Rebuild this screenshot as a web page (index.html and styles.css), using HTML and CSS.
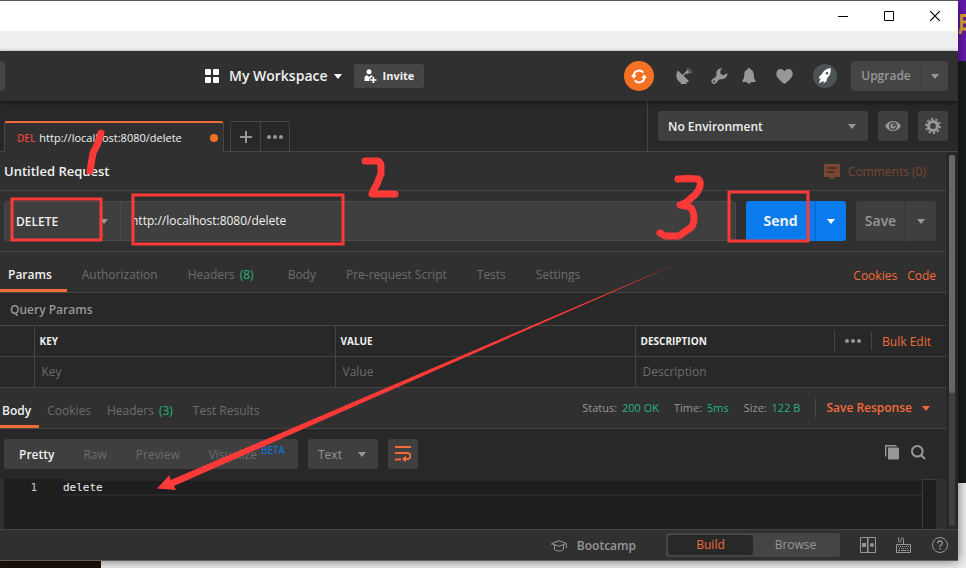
FILE: index.html
```html
<!DOCTYPE html>
<html lang="en">
<head>
<meta charset="utf-8">
<title>Postman</title>
<link rel="stylesheet" href="styles.css">
</head>
<body>
<div class="desktop">
  <div class="app">
    <header class="titlebar">
      <button class="win-btn" aria-label="Minimize"><svg width="10" height="11" viewBox="0 0 10 11"><path d="M0 5.500h10" stroke="#000"/></svg></button>
      <button class="win-btn" aria-label="Maximize"><svg width="10" height="10" viewBox="0 0 10 10"><path d="M.5.500h9v9h-9z" fill="none" stroke="#000"/></svg></button>
      <button class="win-btn" aria-label="Close"><svg width="10" height="10" viewBox="0 0 10 10"><path d="M0 0l10 10M10 0L0 10" stroke="#000" stroke-width="1.200"/></svg></button>
    </header>
    <div class="menubar"></div>

    <div class="header">
      <span class="nub"></span>
      <button class="workspace">
        <svg width="14" height="14" viewBox="0 0 14 14" fill="#fff"><rect width="6" height="6" rx="1"/><rect x="8" width="6" height="6" rx="1"/><rect y="8" width="6" height="6" rx="1"/><rect x="8" y="8" width="6" height="6" rx="1"/></svg>
        <span>My Workspace</span>
        <i class="caret white"></i>
      </button>
      <button class="btn invite">
        <svg width="13" height="14" viewBox="0 0 13 14" fill="#fff"><circle cx="5" cy="2.700" r="2.500"/><path d="M.5 12V9.500C.5 7.500 1.500 6.500 3 6.200L5 8l2-1.800c1 .2 1.700.8 2 1.800H7v1.500H5.500V12z"/><path d="M8.500 8h1.700v2.200h2.300v1.600h-2.300V14H8.500v-2.200H6.300v-1.600h2.200z"/></svg>
        Invite
      </button>
      <div class="tools">
        <button class="sync" aria-label="Sync"><svg width="16" height="15" viewBox="0 0 16 15" fill="none" stroke="#fff" stroke-width="2"><path d="M12.300 3.600A5.600 5.600 0 0 0 2.500 6.500M3.700 11.400A5.600 5.600 0 0 0 13.500 8.500"/><path d="M0 6h5.600L2.800 9.800zM10.400 9H16l-2.800-3.800z" fill="#fff" stroke="none"/></svg></button>
        <button class="icon dish" aria-label="Capture"><svg width="17" height="17" viewBox="0 0 17 17" fill="#979797"><path d="M2 2.500l11 10.500a6.700 6.700 0 0 1-3 1.700l1 1.300H4.500l.5-1.200C0 12.500-1 7 2 2.500z"/><path d="M7 7.500l4-4" stroke="#979797" stroke-width="1.500"/><circle cx="11.200" cy="4.300" r="1.500"/><path d="M10.500 2a4 4 0 0 1 3.500 3.700M11 .5a5 5 0 0 1 4.500 4.700" fill="none" stroke="#979797" stroke-width=".8"/></svg></button>
        <button class="icon wrench" aria-label="Settings"><svg width="17" height="17" viewBox="0 0 17 17" fill="#979797"><path d="M11.500.5C7.500 0 4.500 3 5.500 6.500c.2 1-.3 1.800-1 2.500L1.300 11.200a2.700 2.700 0 0 0 .2 4.300c1.500 1 3.200.3 4.300-1.300l1.700-2c.8-.8 1.700-1.200 2.800-1 3.800.4 6.500-2.500 6-6.200l-4 2.500-2.800-1.700-.2-3z"/><circle cx="3" cy="13.500" r=".9" fill="#303030"/></svg></button>
        <button class="icon bell" aria-label="Notifications"><svg width="14" height="16" viewBox="0 0 14 16" fill="#979797"><path d="M7 0c1 0 1.500.7 1.500 1.400C11 2.200 11.800 4.500 11.800 7c0 3 .5 4 1.700 5.500v1.500H.5v-1.500C1.700 11 2.200 10 2.200 7c0-2.500.8-4.800 3.300-5.600C5.500.7 6 0 7 0zM5 14h4c0 2.200-4 2.200-4 0z"/></svg></button>
        <button class="icon heart" aria-label="Favorites"><svg width="17" height="15" viewBox="0 0 17 15" fill="#979797"><path d="M8.500 15C4 11.500.3 8.500.3 4.700.3-.2 6-1.500 8.500 2.400 11-1.500 16.700-.2 16.700 4.700c0 3.800-3.700 6.800-8.200 10.300z"/></svg></button>
        <button class="avatar" aria-label="Account"><svg width="14" height="16" viewBox="0 0 14 16" fill="#fff"><path d="M12.500 0C8 .5 5.500 3 4 6L1.500 8.300.8 11l2-.9-.5 1.400-1.500 4 3.600-2 1.400-.5-.2 2.300 2.900-2 .8-3.500C12 7.500 13.500 4 12.500 0z"/><circle cx="9" cy="5.300" r="1.300" fill="#4b5354"/></svg></button>
        <div class="split upgrade">
          <button>Upgrade</button><button aria-label="Upgrade options"><i class="caret"></i></button>
        </div>
      </div>
    </div>

    <div class="tabstrip">
      <div class="tabs">
        <button class="req-tab"><b>DEL</b><span>http://localhost:8080/delete</span><i class="unsaved"></i></button>
        <div class="tab-actions">
          <button aria-label="New tab"><svg width="12" height="12" viewBox="0 0 12 12"><path d="M6 0v12M0 6h12" stroke="#979797" stroke-width="2"/></svg></button>
          <button aria-label="Tab options"><svg width="16" height="4" viewBox="0 0 16 4" fill="#979797"><circle cx="2" cy="2" r="2"/><circle cx="8" cy="2" r="2"/><circle cx="14" cy="2" r="2"/></svg></button>
        </div>
      </div>
      <div class="env">
        <label class="select env-select"><select aria-label="Environment"><option>No Environment</option></select><i class="caret"></i></label>
        <button class="btn square" aria-label="Preview environment"><svg width="16" height="10" viewBox="0 0 16 10"><path d="M0 5C4-1.600 12-1.600 16 5 12 11.600 4 11.600 0 5z" fill="#979797"/><circle cx="8" cy="5" r="3.300" fill="none" stroke="#3f3f3f" stroke-width="1.300"/><circle cx="8.800" cy="4.200" r="1.200" fill="#3f3f3f"/></svg></button>
        <button class="btn square" aria-label="Manage environments"><svg width="16" height="16" viewBox="0 0 16 16"><circle cx="8" cy="8" r="4.500" fill="none" stroke="#979797" stroke-width="3.200"/><circle cx="8" cy="8" r="7" fill="none" stroke="#979797" stroke-width="2" stroke-dasharray="2.200 2.198"/></svg></button>
      </div>
    </div>

    <div class="body">
      <main class="content">
        <div class="title-row">
          <h1>Untitled Request</h1>
          <button class="comments"><svg width="16" height="16" viewBox="0 0 16 16"><path d="M0 0h16v13h-5.500L8 16l-2.500-3H0z" fill="#7c4630"/><path d="M3 4h10M3 8h7" stroke="#303030" stroke-width="1.500"/></svg>Comments (0)</button>
        </div>

        <form class="url-row">
          <div class="url-box">
            <label class="method"><select aria-label="Method"><option>DELETE</option></select><i class="caret"></i></label>
            <input class="url" aria-label="Request URL" value="http://localhost:8080/delete">
          </div>
          <div class="split send"><button type="button">Send</button><button type="button" aria-label="Send options"><i class="caret white"></i></button></div>
          <div class="split save"><button type="button">Save</button><button type="button" aria-label="Save options"><i class="caret"></i></button></div>
        </form>

        <nav class="nav request-nav">
          <a class="on" href="#">Params</a><a href="#">Authorization</a><a href="#">Headers <em>(8)</em></a><a href="#">Body</a><a href="#">Pre-request Script</a><a href="#">Tests</a><a href="#">Settings</a>
          <div class="nav-links"><a href="#">Cookies</a><a href="#">Code</a></div>
        </nav>

        <h2>Query Params</h2>
        <table>
          <thead>
            <tr><th class="check"></th><th class="key">KEY</th><th class="value">VALUE</th>
              <th><div class="desc-head"><span>DESCRIPTION</span>
                <button class="more" aria-label="Columns"><svg width="16" height="4" viewBox="0 0 16 4" fill="#979797"><circle cx="2" cy="2" r="2"/><circle cx="8" cy="2" r="2"/><circle cx="14" cy="2" r="2"/></svg></button>
                <button class="bulk">Bulk Edit</button></div></th></tr>
          </thead>
          <tbody>
            <tr><td></td><td><input aria-label="Key" placeholder="Key"></td><td><input aria-label="Value" placeholder="Value"></td><td><input aria-label="Description" placeholder="Description"></td></tr>
          </tbody>
        </table>

        <div class="nav response-nav">
          <a class="on" href="#">Body</a><a href="#">Cookies</a><a href="#">Headers <em>(3)</em></a><a href="#">Test Results</a>
          <div class="meta">
            <span>Status: <em>200 OK</em></span><span>Time: <em>5ms</em></span><span>Size: <em>122 B</em></span>
            <button class="save-response">Save Response<i class="caret orange"></i></button>
          </div>
        </div>

        <div class="viewer-bar">
          <div class="modes"><button class="on">Pretty</button><button>Raw</button><button>Preview</button><button>Visualize<sup>BETA</sup></button></div>
          <label class="select lang"><select aria-label="Language"><option>Text</option></select><i class="caret"></i></label>
          <button class="btn square" aria-label="Wrap lines"><svg width="16" height="16" viewBox="0 0 16 16" fill="none" stroke="#f26b3a" stroke-width="2"><path d="M0 1h16M0 7h12.500a2.800 2.800 0 0 1 0 6H9M0 13.500h6"/><path d="M11 9.500v7L7 13z" fill="#f26b3a" stroke="none"/></svg></button>
          <div class="viewer-tools">
            <button aria-label="Copy"><svg width="15" height="15" viewBox="0 0 15 15"><path d="M.7 11.500V.7h10.800" fill="none" stroke="#979797" stroke-width="1.400"/><rect x="3" y="2.500" width="11" height="12" rx="1" fill="#979797"/></svg></button>
            <button aria-label="Search"><svg width="15" height="15" viewBox="0 0 15 15" fill="none" stroke="#979797" stroke-width="2"><circle cx="6.300" cy="6.300" r="5.300"/><path d="M10 10l4 4"/></svg></button>
          </div>
        </div>

        <div class="editor">
          <span class="line-no">1</span>
          <code>delete</code>
          <span class="minimap"></span>
        </div>
      </main>
      <div class="scroll"><i></i></div>
    </div>

    <footer class="footer">
      <button class="bootcamp"><svg width="16" height="12" viewBox="0 0 16 12" fill="none" stroke="#979797"><path d="M.8 3.500L8 .7l7.200 2.800L8 6.300zM3.500 5v4.500c2 2 7 2 9 0V5M15.300 3.500V8M1 3.500V5"/></svg>Bootcamp</button>
      <div class="toggle"><button class="on">Build</button><button>Browse</button></div>
      <button class="foot-icon" aria-label="Two pane view"><svg width="16" height="16" viewBox="0 0 16 16" fill="none" stroke="#979797"><path d="M.5.500h15v15H.5zM7.500.500v15"/><path d="M8.500 1v14" stroke="#666"/><path d="M2 6h4v4H2z" fill="#979797" stroke="none"/><circle cx="12" cy="8" r="2" fill="#979797" stroke="none"/></svg></button>
      <button class="foot-icon" aria-label="Shortcuts"><svg width="16" height="16" viewBox="0 0 16 16" fill="none" stroke="#979797"><path d="M.5 7.500h14v8H.5zM7.500 7V2.500q0-1.500-1.300-1.500T5 2.500v1Q5 5 3.700 5T2.500 3.500V.5"/><path d="M2 9.500h11M3 11.500h10" stroke-dasharray="1 1"/><path d="M2 13.500h2m1 0h5m1 0h2"/></svg></button>
      <button class="foot-icon" aria-label="Help"><svg width="16" height="16" viewBox="0 0 16 16" fill="none" stroke="#979797"><circle cx="8" cy="8" r="7.500"/><path d="M5.700 6.300c0-3 4.600-3 4.600-.3C10.300 7.800 8 7.800 8 10M8 11v1.500" stroke-width="1.300"/></svg></button>
    </footer>
  </div>

  <aside class="behind"><div class="banner"><svg width="8" height="20" viewBox="0 0 8 20" fill="none" stroke="#dda62e" stroke-width="3"><path d="M8 1.500H3.500V13L2 20M4 8h4M4 15h4"/></svg></div></aside>
  <div class="below"></div>

  <svg class="marks" width="966" height="568" viewBox="0 0 966 568" fill="none" stroke="#fd3a38" stroke-width="3" aria-hidden="true">
    <path d="M12 199h89v41H12zM133 195h210v49H133zM729 192h79v49h-79z"/>
    <path d="M678.500 263L170.700 480l-1.400-4.700L157 488.500l19 1.500-2-4z" fill="#fd3a38" stroke="none"/>
    <g stroke-width="7" stroke-linecap="round" stroke-linejoin="round">
      <path d="M101 133l-3 10-5 10-3 18"/>
      <path d="M365 161h13q3 1 3 6v7q-2 4-4 10-2 3-5 10h23"/>
      <path d="M678 179l10-.5 10 .5q4 3 1 10-3 6-8 9-4 5-11 7 8 1 11 3 3 4 3 11t-5 10-10 7h-14l-5-3"/>
    </g>
  </svg>
</div>
</body>
</html>
```

FILE: styles.css
```css
* { box-sizing: border-box; }
body { margin: 0; font: 12px/18px "Open Sans", "Noto Sans", sans-serif; color: #f0f0f0; background: #ececec; }
button, input, select { font: inherit; color: inherit; background: none; border: 0; padding: 0; margin: 0; }
select { appearance: none; width: 100%; height: 100%; }
button { display: flex; align-items: center; justify-content: center; white-space: nowrap; }
a { color: inherit; text-decoration: none; }
svg { display: block; flex: none; }
em { font-style: normal; color: #26b47f; }

.desktop { position: relative; display: grid; grid-template-columns: minmax(0, 1fr) 8px; min-height: 100vh; grid-template-rows: auto 1fr; overflow: hidden; }
.app { margin-top: 1px; background: #303030; overflow: hidden; border-bottom: 1px solid #606060; box-shadow: 0 -1px #555, 0 0 10px #0008; z-index: 1; }
.behind { background: linear-gradient(#1a1e1f 483px, #ebebeb 483px); }
.banner { height: 61px; padding-top: 14px; background: #6719ad; overflow: hidden; }
.below { grid-column: 1 / 3; background: linear-gradient(90deg, #1c120a 101px, #ececec 101px); }
.marks { position: absolute; top: 0; left: 0; z-index: 2; pointer-events: none; }

.caret { display: block; flex: none; border: 4px solid transparent; border-top: 5px solid #979797; border-bottom: 0; }
.caret.white { border-top-color: #fff; }
.caret.orange { border-top-color: #f26b3a; }
.btn { background: #454545; border-radius: 3px; }
.square { width: 30px; height: 30px; background: #3f3f3f; }

.titlebar { display: flex; justify-content: flex-end; height: 30px; background: #fff; }
.win-btn { width: 46px; height: 30px; }
.menubar { height: 20px; background: #efefef; }

.header { position: relative; display: flex; align-items: center; height: 50px; padding-right: 10px; box-shadow: 0 1px 4px #0009; }
.nub { width: 5px; height: 30px; margin-right: 200px; background: #454545; border-radius: 0 3px 3px 0; }
.workspace { gap: 10px; font-size: 14px; font-weight: 600; }
.workspace .caret { margin: 0 12px 0 -4px; }
.invite { height: 24px; padding: 0 10px; gap: 6px; font-size: 11px; font-weight: 700; }
.tools { display: flex; align-items: center; margin-left: auto; }
.sync { width: 30px; height: 30px; border-radius: 50%; background: #f47023; margin-right: 22px; }
.icon { margin-right: 18px; }
.wrench { margin-right: 14px; }
.bell, .heart { margin-right: 20px; }
.avatar { width: 24px; height: 24px; border-radius: 50%; background: #4b5354; margin-right: 14px; }

.split { display: flex; border-radius: 3px; overflow: hidden; }
.split button + button { border-left: 1px solid #0003; }
.upgrade { height: 30px; background: #454545; color: #979797; font-weight: 600; }
.upgrade button:first-child { width: 70px; }
.upgrade button + button { width: 27px; }

.tabstrip { display: flex; justify-content: space-between; background: #282828; height: 51px; border-bottom: 1px solid #454545; }
.tabs { display: flex; align-items: flex-end; gap: 6px; padding-left: 4px; }
.req-tab { width: 220px; height: 31px; margin-bottom: -1px; justify-content: flex-start; gap: 4px; padding: 0 5px 0 12px; font-size: 11px; background: #303030; border: 1px solid #454545; border-top: 2px solid #f26b3a; border-bottom: 0; border-radius: 3px 3px 0 0; }
.req-tab b { color: #e64343; font-size: 10px; font-weight: 600; }
.unsaved { width: 8px; height: 8px; margin-left: auto; border-radius: 50%; background: #f47023; }
.tab-actions { display: flex; border: 1px solid #454545; border-bottom: 0; border-radius: 3px 3px 0 0; }
.tab-actions button { width: 29px; height: 29px; }
.tab-actions button + button { border-left: 1px solid #454545; }
.env { display: flex; align-items: center; gap: 10px; padding: 0 10px; border-left: 1px solid #454545; }
.select { display: flex; align-items: center; height: 30px; padding-right: 12px; background: #3f3f3f; border-radius: 3px; }
.select select { padding: 2px 0 0 10px; }
.env-select { width: 210px; font-weight: 600; }

.body { display: flex; }
.content { flex: 1; min-width: 0; background: #303030; }
.scroll { width: 12px; padding: 3px; background: linear-gradient(#404040, #404040) 3px 3px / 6px 371px no-repeat #282828; }
.scroll i { display: block; height: 238px; border-radius: 3px; background: #676767; }

.title-row { display: flex; align-items: center; justify-content: space-between; height: 39px; padding: 0 20px 0 4px; border-bottom: 1px solid #454545; }
h1 { margin: 0; font-size: 13px; font-weight: 600; }
.comments { gap: 8px; padding-top: 1px; color: #7c4630; }

.url-row { display: flex; gap: 10px; height: 61px; padding: 10px 10px 10px 4px; border-bottom: 1px solid #454545; }
.url-box { display: flex; flex: 1; background: #3f3f3f; border: 1px solid #4a4a4a; border-radius: 3px; }
.method { display: flex; align-items: center; width: 116px; padding: 0 12px 0 11px; border-right: 1px solid #4a4a4a; font-weight: 600; }
.method select { padding-top: 2px; }
.url { flex: 1; min-width: 0; padding-left: 10px; }
.send, .save { font-size: 14px; font-weight: 600; }
.send { background: #097bed; font-weight: 700; }
.send button:first-child { width: 69px; }
.send button + button { width: 31px; }
.save { background: #3f3f3f; color: #979797; }
.save button:first-child { width: 49px; }
.save button + button { width: 31px; }

.nav { display: flex; height: 41px; padding-right: 10px; border-bottom: 1px solid #454545; color: #6c6c6c; }
.nav > a { display: flex; align-items: center; gap: 5px; padding: 9px 15px 0; border-bottom: 3px solid transparent; white-space: nowrap; }
.nav > a:first-child { margin-left: -7px; }
.nav > a em { margin-right: 4px; }
.nav > .on { color: #f0f0f0; font-weight: 600; border-color: #f26b3a; }
.nav-links { display: flex; align-items: center; gap: 10px; margin-left: auto; padding-top: 7px; color: #f26b3a; }
h2 { margin: 0; padding: 8px 10px 6px; font-size: 12px; font-weight: 600; color: #979797; background: #282828; }

table { width: 100%; table-layout: fixed; border-collapse: collapse; background: #282828; }
th, td { height: 31px; padding: 0 0 0 5px; border: 1px solid #454545; border-width: 1px 0 1px 1px; text-align: left; }
th:first-child, td:first-child { border-left: 0; }
th { font-size: 10px; font-weight: 700; }
.check { width: 34px; }
.key { width: 301px; }
.value { width: 300px; }
td input { width: 100%; padding-left: 2px; }
::placeholder { color: #6c6c6c; opacity: 1; }
.desc-head { display: flex; align-items: center; }
.more { width: 37px; height: 22px; margin-left: auto; border-left: 1px solid #454545; }
.bulk { height: 18px; padding: 2px 15px 0 10px; border-left: 1px solid #454545; color: #f26b3a; font-size: 12px; font-weight: 400; }

.nav.response-nav > a { padding: 9px 8px 0; }
.nav.response-nav > a:first-child { margin-left: -6px; }
.meta { display: flex; align-items: center; gap: 15px; margin-left: auto; font-size: 11px; color: #979797; white-space: nowrap; }
.meta em { margin-left: 2px; }
.save-response { gap: 10px; height: 20px; padding: 0 6px 0 10px; border-left: 1px solid #454545; color: #f26b3a; font-size: 12px; font-weight: 600; }

.viewer-bar { display: flex; align-items: center; gap: 10px; height: 50px; padding: 0 20px 0 4px; background: #282828; }
.modes { display: flex; width: 294px; height: 30px; padding: 2px 0 0 15px; gap: 29px; background: #3f3f3f; border-radius: 3px; color: #6c6c6c; }
.modes .on { color: #f0f0f0; font-weight: 600; }
sup { align-self: flex-start; margin-left: 4px; font-size: 10px; line-height: 18px; color: #097bed; }
.lang { width: 70px; color: #979797; }
.viewer-tools { display: flex; gap: 11px; margin-left: auto; padding-bottom: 4px; }

.editor { display: flex; height: 50px; margin-left: 4px; margin-right: 10px; background: #1e1e1e; font: 11px/14px "DejaVu Sans Mono", monospace; }
.line-no { width: 59px; padding: 2px 26px 0 0; text-align: right; color: #c8c8c8; }
.editor code { flex: 1; height: 17px; font: inherit; border: 2px solid #282828; border-width: 2px 0; }
.minimap { width: 14px; border: 1px solid #3c3c3c; border-width: 1px 0 0 1px; }

.footer { display: flex; align-items: center; height: 31px; padding-right: 10px; border-top: 1px solid #454545; color: #979797; }
.bootcamp { gap: 10px; padding-top: 1px; margin-left: auto; margin-right: 30px; font-weight: 600; }
.toggle { display: flex; height: 24px; margin-right: 20px; padding: 2px; border-radius: 3px; background: #454545; }
.toggle button { width: 85px; border-radius: 3px; }
.toggle .on { background: #282828; color: #f26b3a; }
.foot-icon + .foot-icon { margin-left: 20px; }
```
